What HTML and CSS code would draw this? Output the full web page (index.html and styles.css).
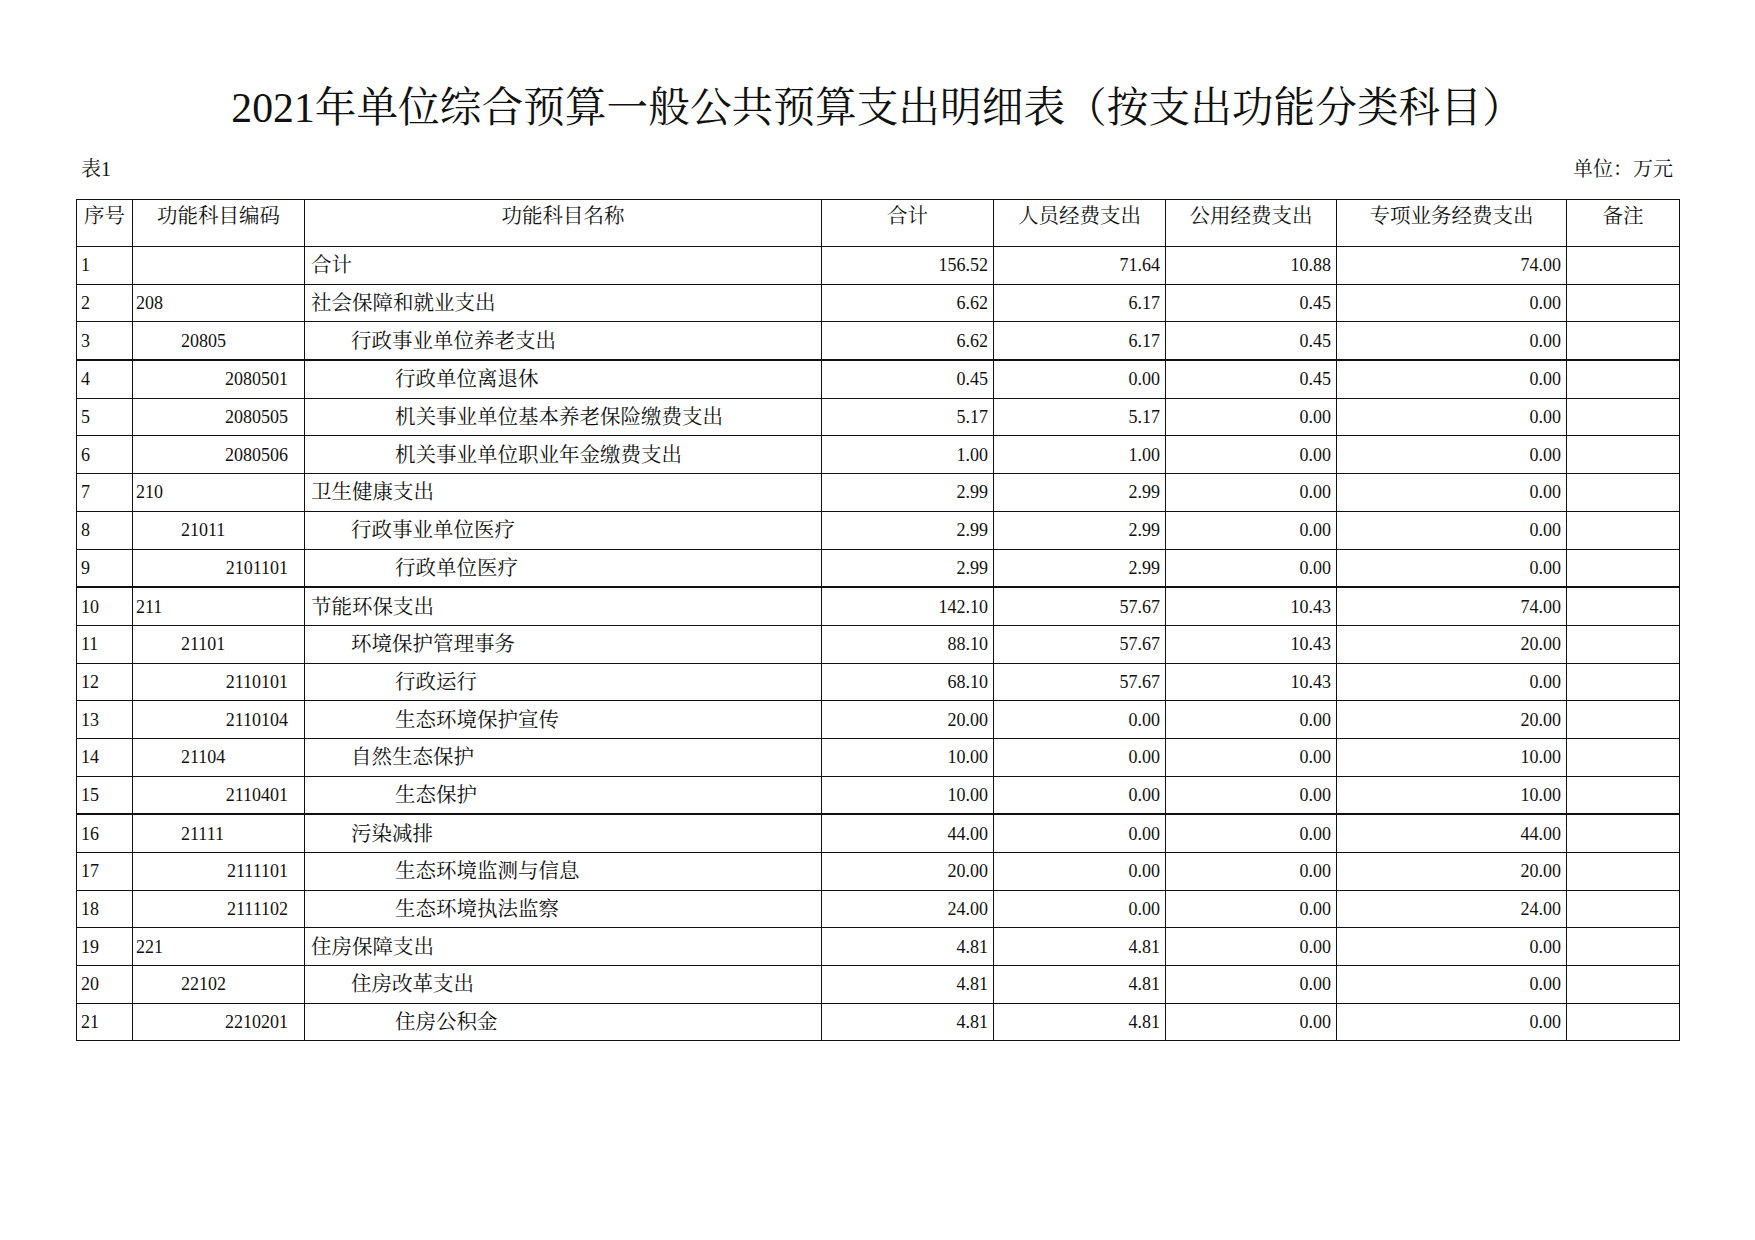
FILE: index.html
```html
<!DOCTYPE html>
<html lang="zh-CN">
<head>
<meta charset="utf-8">
<title>2021年单位综合预算一般公共预算支出明细表（按支出功能分类科目）</title>
<link rel="stylesheet" href="styles.css">
</head>
<body>
<div class="page">
  <h1 class="title">2021年单位综合预算一般公共预算支出明细表（按支出功能分类科目）</h1>
  <div class="meta">
    <span class="meta-left">表1</span>
    <span class="meta-right">单位：万元</span>
  </div>
  <table class="grid">
    <colgroup>
      <col class="c-no"><col class="c-code"><col class="c-name"><col class="c-amt"><col class="c-amt"><col class="c-amt2"><col class="c-spec"><col class="c-note">
    </colgroup>
    <thead>
      <tr>
        <th>序号</th><th>功能科目编码</th><th>功能科目名称</th><th>合计</th><th>人员经费支出</th><th>公用经费支出</th><th>专项业务经费支出</th><th>备注</th>
      </tr>
    </thead>
    <tbody>
      <tr><td class="no">1</td><td class="code"></td><td class="name l1">合计</td><td class="num">156.52</td><td class="num">71.64</td><td class="num">10.88</td><td class="num">74.00</td><td></td></tr>
      <tr><td class="no">2</td><td class="code l1">208</td><td class="name l1">社会保障和就业支出</td><td class="num">6.62</td><td class="num">6.17</td><td class="num">0.45</td><td class="num">0.00</td><td></td></tr>
      <tr class="thick"><td class="no">3</td><td class="code l2">20805</td><td class="name l2">行政事业单位养老支出</td><td class="num">6.62</td><td class="num">6.17</td><td class="num">0.45</td><td class="num">0.00</td><td></td></tr>
      <tr><td class="no">4</td><td class="code l3">2080501</td><td class="name l3">行政单位离退休</td><td class="num">0.45</td><td class="num">0.00</td><td class="num">0.45</td><td class="num">0.00</td><td></td></tr>
      <tr><td class="no">5</td><td class="code l3">2080505</td><td class="name l3">机关事业单位基本养老保险缴费支出</td><td class="num">5.17</td><td class="num">5.17</td><td class="num">0.00</td><td class="num">0.00</td><td></td></tr>
      <tr><td class="no">6</td><td class="code l3">2080506</td><td class="name l3">机关事业单位职业年金缴费支出</td><td class="num">1.00</td><td class="num">1.00</td><td class="num">0.00</td><td class="num">0.00</td><td></td></tr>
      <tr><td class="no">7</td><td class="code l1">210</td><td class="name l1">卫生健康支出</td><td class="num">2.99</td><td class="num">2.99</td><td class="num">0.00</td><td class="num">0.00</td><td></td></tr>
      <tr><td class="no">8</td><td class="code l2">21011</td><td class="name l2">行政事业单位医疗</td><td class="num">2.99</td><td class="num">2.99</td><td class="num">0.00</td><td class="num">0.00</td><td></td></tr>
      <tr class="thick"><td class="no">9</td><td class="code l3">2101101</td><td class="name l3">行政单位医疗</td><td class="num">2.99</td><td class="num">2.99</td><td class="num">0.00</td><td class="num">0.00</td><td></td></tr>
      <tr><td class="no">10</td><td class="code l1">211</td><td class="name l1">节能环保支出</td><td class="num">142.10</td><td class="num">57.67</td><td class="num">10.43</td><td class="num">74.00</td><td></td></tr>
      <tr><td class="no">11</td><td class="code l2">21101</td><td class="name l2">环境保护管理事务</td><td class="num">88.10</td><td class="num">57.67</td><td class="num">10.43</td><td class="num">20.00</td><td></td></tr>
      <tr><td class="no">12</td><td class="code l3">2110101</td><td class="name l3">行政运行</td><td class="num">68.10</td><td class="num">57.67</td><td class="num">10.43</td><td class="num">0.00</td><td></td></tr>
      <tr><td class="no">13</td><td class="code l3">2110104</td><td class="name l3">生态环境保护宣传</td><td class="num">20.00</td><td class="num">0.00</td><td class="num">0.00</td><td class="num">20.00</td><td></td></tr>
      <tr><td class="no">14</td><td class="code l2">21104</td><td class="name l2">自然生态保护</td><td class="num">10.00</td><td class="num">0.00</td><td class="num">0.00</td><td class="num">10.00</td><td></td></tr>
      <tr class="thick"><td class="no">15</td><td class="code l3">2110401</td><td class="name l3">生态保护</td><td class="num">10.00</td><td class="num">0.00</td><td class="num">0.00</td><td class="num">10.00</td><td></td></tr>
      <tr><td class="no">16</td><td class="code l2">21111</td><td class="name l2">污染减排</td><td class="num">44.00</td><td class="num">0.00</td><td class="num">0.00</td><td class="num">44.00</td><td></td></tr>
      <tr><td class="no">17</td><td class="code l3">2111101</td><td class="name l3">生态环境监测与信息</td><td class="num">20.00</td><td class="num">0.00</td><td class="num">0.00</td><td class="num">20.00</td><td></td></tr>
      <tr><td class="no">18</td><td class="code l3">2111102</td><td class="name l3">生态环境执法监察</td><td class="num">24.00</td><td class="num">0.00</td><td class="num">0.00</td><td class="num">24.00</td><td></td></tr>
      <tr><td class="no">19</td><td class="code l1">221</td><td class="name l1">住房保障支出</td><td class="num">4.81</td><td class="num">4.81</td><td class="num">0.00</td><td class="num">0.00</td><td></td></tr>
      <tr><td class="no">20</td><td class="code l2">22102</td><td class="name l2">住房改革支出</td><td class="num">4.81</td><td class="num">4.81</td><td class="num">0.00</td><td class="num">0.00</td><td></td></tr>
      <tr><td class="no">21</td><td class="code l3">2210201</td><td class="name l3">住房公积金</td><td class="num">4.81</td><td class="num">4.81</td><td class="num">0.00</td><td class="num">0.00</td><td></td></tr>
    </tbody>
  </table>
</div>
</body>
</html>
```

FILE: styles.css
```css
html, body {
  margin: 0;
  padding: 0;
  background: #ffffff;
}

body {
  font-family: "Liberation Serif", "Noto Serif CJK SC", "Noto Sans CJK SC", serif;
  color: #111111;
}

.page {
  width: 1603px;
  margin-left: 76px;
  padding-top: 84px;
}

.title {
  margin: 0;
  font-size: 41.7px;
  font-weight: normal;
  line-height: 49px;
  height: 49px;
  text-align: center;
  white-space: nowrap;
  letter-spacing: 0;
}

.meta {
  display: flex;
  justify-content: space-between;
  align-items: center;
  margin-top: 24px;
  height: 24px;
  font-size: 20px;
  line-height: 24px;
}

.meta-left {
  padding-left: 5px;
}

.meta-right {
  padding-right: 6px;
}

.grid {
  margin-top: 18px;
  border-collapse: collapse;
  table-layout: fixed;
  width: 1603px;
  font-size: 20.5px;
}

.c-no { width: 56px; }
.c-code { width: 172px; }
.c-name { width: 517px; }
.c-amt { width: 172px; }
.c-amt2 { width: 171px; }
.c-spec { width: 230px; }
.c-note { width: 113px; }

.grid th,
.grid td {
  border: 1px solid #111111;
  padding: 0;
  overflow: hidden;
  white-space: nowrap;
}

.grid th {
  height: 40px;
  vertical-align: top;
  font-weight: normal;
  text-align: center;
  padding-top: 6px;
  line-height: 20px;
}

.grid td {
  height: 36.7px;
  vertical-align: middle;
  line-height: 20px;
}

.grid tr.thick td {
  border-bottom-width: 2px;
}

.grid td.no {
  font-size: 18px;
  padding-left: 4px;
}

.grid td.code {
  font-size: 18px;
}

.grid td.code.l1 {
  padding-left: 3px;
}

.grid td.code.l2 {
  padding-left: 48px;
}

.grid td.code.l3 {
  text-align: right;
  padding-right: 16px;
}

.grid td.name.l1 {
  padding-left: 6px;
}

.grid td.name.l2 {
  padding-left: 46px;
}

.grid td.name.l3 {
  padding-left: 90px;
}

.grid td.num {
  font-size: 18px;
  text-align: right;
  padding-right: 5px;
}
```
